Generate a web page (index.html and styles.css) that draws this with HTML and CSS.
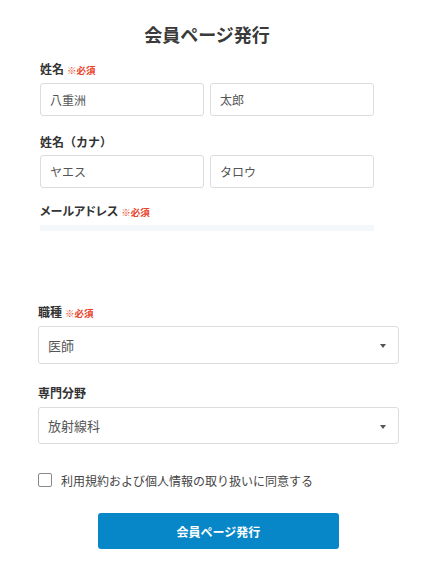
FILE: index.html
```html
<!DOCTYPE html>
<html lang="ja">
<head>
<meta charset="utf-8">
<title>会員ページ発行</title>
<link rel="stylesheet" href="styles.css">
</head>
<body>
<main class="page">
  <h1 class="title">会員ページ発行</h1>
  <section class="top">
    <div class="field first">
      <div class="label">姓名<span class="req">※必須</span></div>
      <div class="pair">
        <input class="text" type="text" value="八重洲">
        <input class="text" type="text" value="太郎">
      </div>
    </div>
    <div class="field kana">
      <div class="label">姓名（カナ）</div>
      <div class="pair">
        <input class="text" type="text" value="ヤエス">
        <input class="text" type="text" value="タロウ">
      </div>
    </div>
    <div class="field mail">
      <div class="label">メールアドレス<span class="req">※必須</span></div>
      <div class="strip"></div>
    </div>
  </section>
  <section class="bottom">
    <div class="field job">
      <div class="label">職種<span class="req">※必須</span></div>
      <div class="select-wrap tall">
        <select class="select"><option>医師</option></select>
      </div>
    </div>
    <div class="field spec">
      <div class="label">専門分野</div>
      <div class="select-wrap">
        <select class="select"><option>放射線科</option></select>
      </div>
    </div>
    <label class="agree"><span class="box"></span><span>利用規約および個人情報の取り扱いに同意する</span></label>
    <div class="actions">
      <button class="submit" type="button">会員ページ発行</button>
    </div>
  </section>
</main>
</body>
</html>
```

FILE: styles.css
```css
* { box-sizing: border-box; }
body {
  margin: 0;
  background: #fff;
  font-family: "Noto Sans CJK JP", "Noto Sans", sans-serif;
  color: #333;
}
.page {
  padding-top: 20px;
  width: 429px;
}
.title {
  margin: 0;
  width: 334px;
  margin-left: 40px;
  text-align: center;
  font-size: 18px;
  line-height: 28px;
  font-weight: 700;
  color: #3a3a3a;
}
.top {
  width: 334px;
  margin-left: 40px;
}
.bottom {
  width: 361px;
  margin-left: 38px;
}
.label {
  font-size: 12px;
  line-height: 18px;
  height: 18px;
  font-weight: 700;
  color: #333;
  display: flex;
  align-items: baseline;
  font-feature-settings: "palt";
}
.kana .label { font-feature-settings: normal; }
.req {
  font-size: 9.5px;
  color: #e8452a;
  margin-left: 3px;
  font-weight: 700;
}
.field.first { margin-top: 12px; }
.field.kana { margin-top: 17px; }
.field.mail { margin-top: 14px; }
.field.job { margin-top: 72px; }
.field.spec { margin-top: 20px; }
.first .label { margin-bottom: 5px; }
.kana .label { margin-bottom: 4px; }
.mail .label { margin-bottom: 5px; }
.job .label, .spec .label { margin-bottom: 5px; }
.pair {
  display: grid;
  grid-template-columns: 164px 164px;
  column-gap: 6px;
}
.text {
  width: 164px;
  height: 33px;
  border: 1px solid #dcdcdc;
  border-radius: 3px;
  padding: 0 9px;
  font-family: inherit;
  font-size: 12px;
  color: #555;
  background: #fff;
  outline: none;
}
.strip {
  height: 6px;
  background: #f4f8fb;
}
.select-wrap {
  position: relative;
  height: 37px;
}
.select-wrap.tall { height: 38px; }
.select {
  -webkit-appearance: none;
  appearance: none;
  width: 100%;
  height: 100%;
  border: 1px solid #dcdcdc;
  border-radius: 3px;
  padding: 0 9px;
  font-family: inherit;
  font-size: 13px;
  color: #555;
  background: #fff;
  outline: none;
}
.select-wrap::after {
  content: "";
  position: absolute;
  right: 13px;
  top: 50%;
  margin-top: -1px;
  border-left: 3.5px solid transparent;
  border-right: 3.5px solid transparent;
  border-top: 4px solid #555;
}
.agree {
  display: flex;
  align-items: center;
  margin-top: 26px;
  height: 20px;
  font-size: 12px;
  color: #444;
}
.box {
  width: 14px;
  height: 14px;
  border: 1.5px solid #8a8a8a;
  border-radius: 2px;
  margin-right: 9px;
  flex: none;
}
.actions {
  display: flex;
  justify-content: center;
  margin-top: 23px;
}
.submit {
  width: 241px;
  height: 36px;
  border: none;
  border-radius: 3px;
  background: #0887c8;
  color: #fff;
  font-family: inherit;
  font-size: 12px;
  font-weight: 700;
}
```
